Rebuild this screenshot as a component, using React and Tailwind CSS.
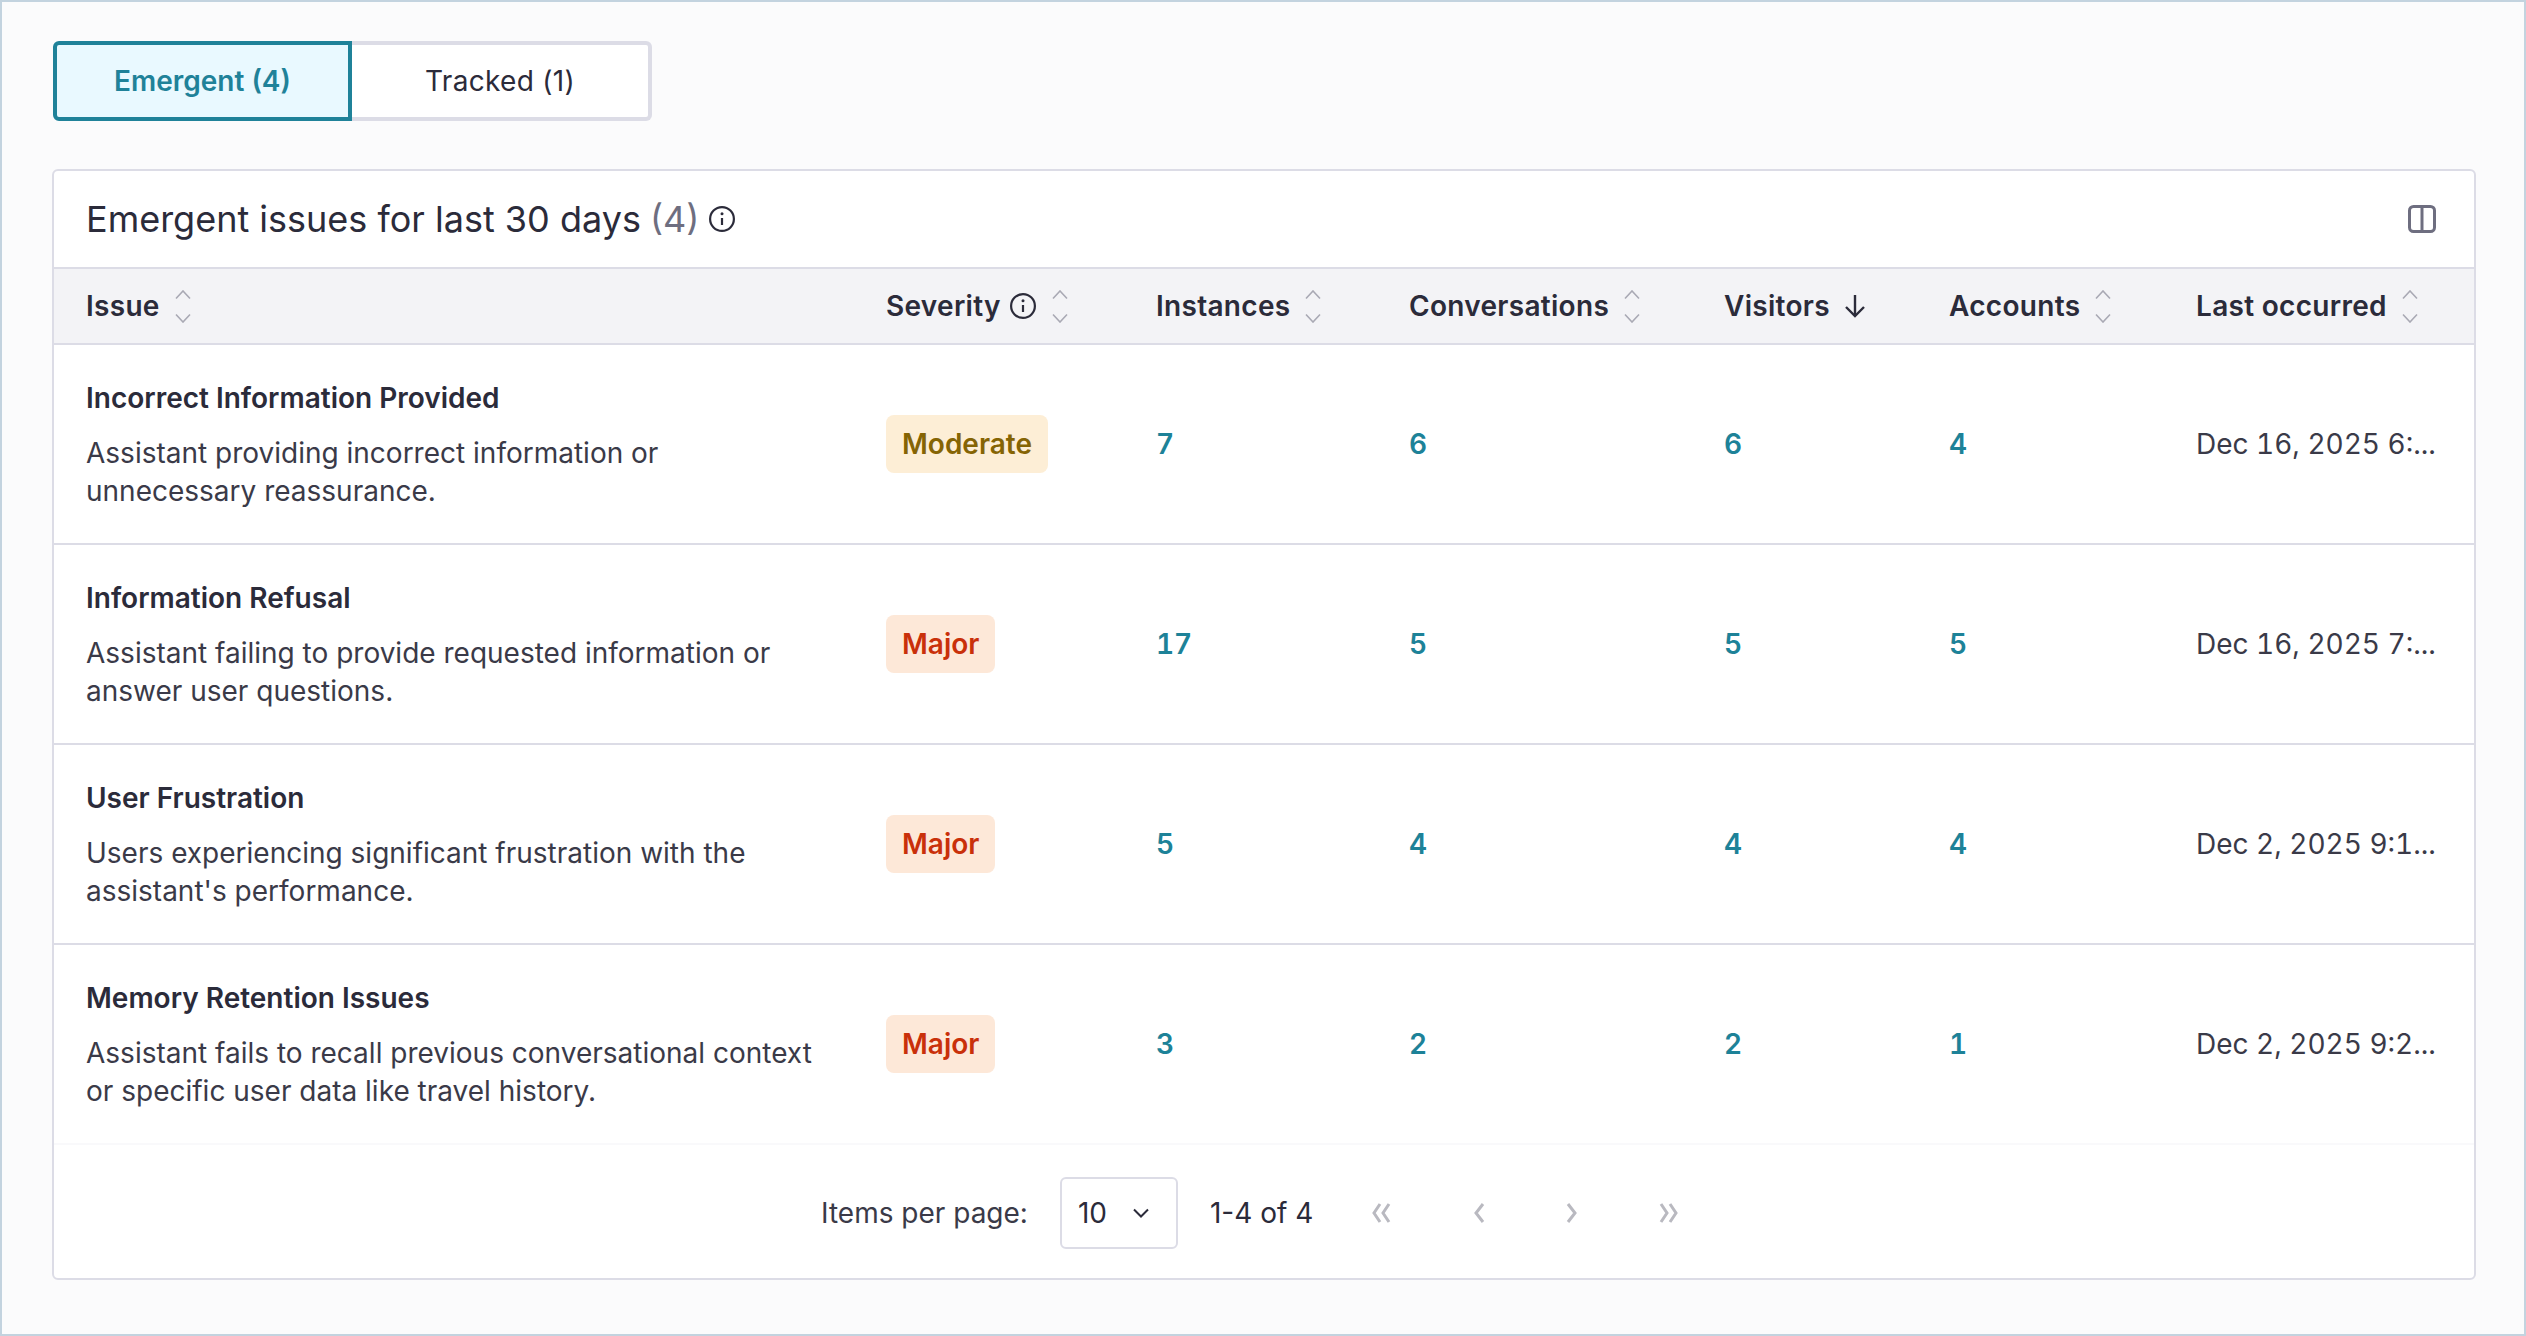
const issues = [
  {
    title: "Incorrect Information Provided",
    desc: ["Assistant providing incorrect information or", "unnecessary reassurance."],
    severity: "Moderate",
    instances: 7,
    conversations: 6,
    visitors: 6,
    accounts: 4,
    last: "Dec 16, 2025 6:...",
  },
  {
    title: "Information Refusal",
    desc: ["Assistant failing to provide requested information or", "answer user questions."],
    severity: "Major",
    instances: 17,
    conversations: 5,
    visitors: 5,
    accounts: 5,
    last: "Dec 16, 2025 7:...",
  },
  {
    title: "User Frustration",
    desc: ["Users experiencing significant frustration with the", "assistant's performance."],
    severity: "Major",
    instances: 5,
    conversations: 4,
    visitors: 4,
    accounts: 4,
    last: "Dec 2, 2025 9:1...",
  },
  {
    title: "Memory Retention Issues",
    desc: ["Assistant fails to recall previous conversational context", "or specific user data like travel history."],
    severity: "Major",
    instances: 3,
    conversations: 2,
    visitors: 2,
    accounts: 1,
    last: "Dec 2, 2025 9:2...",
  },
];

const SortIcon = ({ className = "ml-[15px]" }) => (
  <svg width="16" height="33" viewBox="0 0 16 33" fill="none" stroke="#a9a9b4" strokeWidth="1.6" className={`shrink-0 ${className}`}>
    <path d="M1 8.5 8 1l7 7.5" />
    <path d="M1 24.5 8 32l7-7.5" />
  </svg>
);

const InfoIcon = () => (
  <svg width="26" height="26" viewBox="0 0 26 26" fill="none" stroke="#2b2b3a" strokeWidth="2.2" className="shrink-0">
    <circle cx="13" cy="13" r="11.9" />
    <path d="M13 12v7" />
    <circle cx="13" cy="7.8" r="1.5" fill="#2b2b3a" stroke="none" />
  </svg>
);

const Th = ({ className, children }) => (
  <th className={`pl-8 text-left font-semibold tracking-[0.3px] ${className}`}>
    <div className="flex items-center">{children}</div>
  </th>
);

const Num = ({ children }) => (
  <td className="pl-8 text-[#1d8298] font-semibold tabular-nums">{children}</td>
);

const Pager = ({ d, w = 20 }) => (
  <svg width={w} height="20" viewBox={`0 0 ${w} 20`} fill="none" stroke="#b9b9c0" strokeWidth="3" className="shrink-0">
    <path d={d} />
  </svg>
);

export default function App() {
  return (
    <div className="h-screen border-2 border-[#c3d3df] bg-[#fbfbfc] pl-[50px] pr-[48px] pt-[39px] text-[#2b2b3a] text-[28px] overflow-hidden" style={{ fontFamily: "Inter, sans-serif" }}>
      <div className="ml-px flex h-[80px] w-[599px]">
        <button className="w-[299px] rounded-l-md border-4 border-[#1f8299] bg-[#e9f9ff] font-semibold text-[#1f8299]">
          Emergent (4)
        </button>
        <button className="w-[300px] rounded-r-md border-4 border-l-0 border-[#dcdce6] bg-white tracking-[0.3px]">
          Tracked (1)
        </button>
      </div>

      <div className="mt-[48px] h-[1111px] rounded-md border-2 border-[#dcdce6] bg-white">
        <div className="flex h-[96px] items-center justify-between pl-8 pr-[38px]">
          <div className="flex items-center text-[36px]">
            Emergent issues for last 30 days
            <span className="ml-[9px] text-[#6e6e80]">(4)</span>
            <span className="ml-[10px]"><InfoIcon /></span>
          </div>
          <svg width="28" height="28" viewBox="0 0 28 28" fill="none" stroke="#6e6e80" strokeWidth="3">
            <rect x="1.5" y="1.5" width="25" height="25" rx="4" />
            <path d="M14 1.5v25" />
          </svg>
        </div>

        <table className="w-full table-fixed border-collapse">
          <thead>
            <tr className="h-[76px] border-y-2 border-[#dcdce6] bg-[#f3f3f6]">
              <Th className="w-[800px]">Issue<SortIcon /></Th>
              <Th className="w-[270px]">
                Severity
                <span className="ml-[9px]"><InfoIcon /></span>
                <SortIcon className="ml-[16px]" />
              </Th>
              <Th className="w-[253px]">Instances<SortIcon /></Th>
              <Th className="w-[315px]">Conversations<SortIcon /></Th>
              <Th className="w-[225px]">
                Visitors
                <svg width="22" height="24" viewBox="0 0 22 24" fill="none" stroke="#2b2b3a" strokeWidth="2.4" className="ml-[14px]">
                  <path d="M11 1v21" />
                  <path d="M2 13l9 9 9-9" />
                </svg>
              </Th>
              <Th className="w-[247px]">Accounts<SortIcon /></Th>
              <Th>Last occurred<SortIcon /></Th>
            </tr>
          </thead>
          <tbody>
            {issues.map((row, i) => (
              <tr key={row.title} className={`h-[200px] border-b-2 ${i === 3 ? "border-[#f9f9fb]" : "border-[#dcdce6]"}`}>
                <td className="pl-8 align-top pt-[34px]">
                  <div className="font-semibold leading-[38px]">{row.title}</div>
                  <div className="mt-[17px] leading-[38px] text-[#3a3a48]">
                    <div>{row.desc[0]}</div>
                    <div>{row.desc[1]}</div>
                  </div>
                </td>
                <td className="pl-8">
                  <span
                    className={`inline-flex h-[58px] items-center rounded-lg px-4 font-semibold ${
                      row.severity === "Moderate" ? "bg-[#fdeed6] text-[#856404]" : "bg-[#fde8d8] text-[#c9300a]"
                    }`}
                  >
                    {row.severity}
                  </span>
                </td>
                <Num>{row.instances}</Num>
                <Num>{row.conversations}</Num>
                <Num>{row.visitors}</Num>
                <Num>{row.accounts}</Num>
                <td className="pl-8 whitespace-nowrap text-[#3a3a48] tabular-nums">{row.last}</td>
              </tr>
            ))}
          </tbody>
        </table>

        <div className="flex h-[135px] items-center pl-[767px]">
          <span className="text-[#3a3a48]">Items per page:</span>
          <div className="ml-8 flex h-[72px] w-[118px] items-center rounded-md border-2 border-[#dcdce6] pl-[16px]">
            10
            <svg width="16" height="10" viewBox="0 0 16 10" fill="none" stroke="#2b2b3a" strokeWidth="2" className="ml-[26px]">
              <path d="M1 1.5 8 8.5l7-7" />
            </svg>
          </div>
          <span className="ml-8">1-4 of 4</span>
          <div className="ml-[58px] flex w-[308px] items-center justify-between">
            <Pager d="M9 1 3 10l6 9M18 1l-6 9 6 9" />
            <Pager w={12} d="M10 1 3 10l7 9" />
            <Pager w={12} d="M2 1l7 9-7 9" />
            <Pager d="M2 1l6 9-6 9M11 1l6 9-6 9" />
          </div>
        </div>
      </div>
    </div>
  );
}
